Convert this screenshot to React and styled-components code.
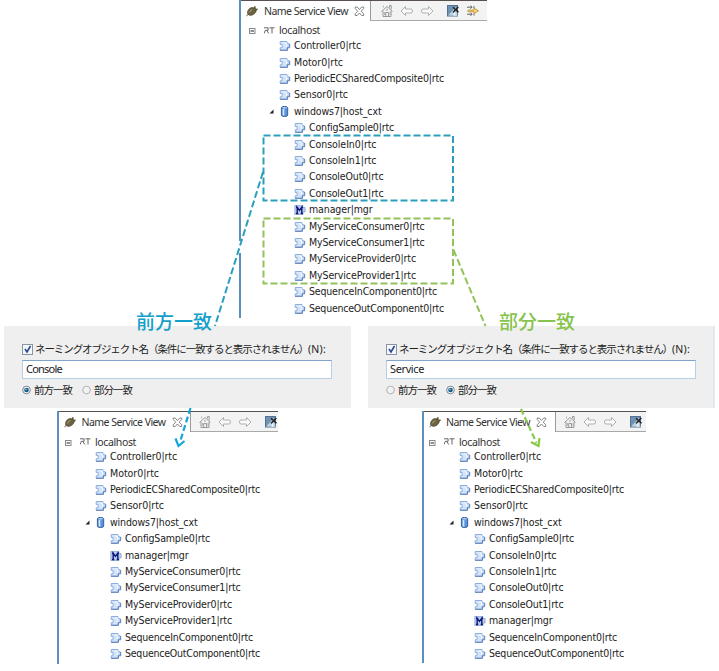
import React, { useLayoutEffect, useRef, useState } from "react";
import styled, { createGlobalStyle } from "styled-components";

const GlobalStyle = createGlobalStyle`
  body { margin: 0; background: #fff; }
  * { box-sizing: border-box; }
`;

const Page = styled.main`
  position: relative;
  width: 719px;
  height: 671px;
  overflow: hidden;
  background: #fff;
  color: #222;
  font: 10.5px/14px "Noto Sans", "Noto Sans CJK JP", sans-serif;
`;

const TopSection = styled.section`
  height: 326px;
  padding-left: 239px;
`;

const FilterSection = styled.section`
  display: flex;
  gap: 17px;
  height: 82px;
  padding-left: 4px;
`;

const ResultSection = styled.section`
  display: flex;
  gap: 144px;
  align-items: flex-start;
  padding: 3px 0 0 57px;
`;

const View = styled.div`
  display: flex;
  flex-direction: column;
  width: ${(p) => p.$width}px;
  height: ${(p) => p.$height}px;
  border-left: 2px solid #5b8fc0;
  overflow: hidden;
`;

const TabBar = styled.div`
  display: flex;
  flex: none;
  height: 21px;
  border-top: 1px solid #57504f;
`;

const Tab = styled.div`
  display: flex;
  align-items: center;
  flex: none;
  width: ${(p) => p.$width}px;
  padding-left: ${(p) => p.$inset}px;
  border-right: 1px solid #9a9a9a;
  color: #333;
`;

const TabTitle = styled.span`
  flex: none;
  width: 84px;
  margin: 0 6px 0 ${(p) => p.$gap}px;
`;

const Toolbar = styled.div`
  display: flex;
  align-items: center;
  flex: 1;
  gap: 6px;
  padding-left: ${(p) => p.$inset}px;
  overflow: hidden;
  background: #f3f3f3;
  border-bottom: 1px solid #a9a9a9;
  & > svg { flex: none; }
`;

const Tree = styled.ul`
  list-style: none;
  margin: 0;
  padding: ${(p) => p.$top}px 0 0 ${(p) => p.$inset}px;
`;

const RootRow = styled.li`
  display: flex;
  align-items: center;
  height: ${(p) => p.$height}px;
  color: #333;
`;

const Row = styled.li`
  display: flex;
  align-items: center;
  height: 16.42px;
  padding-left: ${(p) => (p.$level === 2 ? 45 : 20)}px;
  font-family: "DejaVu Sans Condensed", "DejaVu Sans", sans-serif;
  font-stretch: condensed;
  font-size: 10.5px;
`;

const Twist = styled.span`
  display: flex;
  align-items: center;
  width: 10px;
  height: 10px;
`;

const IconSlot = styled.span`
  display: flex;
  flex: none;
  width: 15px;
  padding-top: 2px;
`;

const FitBox = styled.span`
  display: inline-block;
  flex: none;
  white-space: nowrap;
`;

const FilterPanel = styled.div`
  width: 347px;
  height: 82px;
  padding: 17px 0 0 18px;
  background: #efefef;
  border-right: ${(p) => (p.$edge ? "2px solid #e1e9f1" : "0")};
`;

const CheckLine = styled.label`
  display: flex;
  align-items: center;
  height: 13px;
  color: #222;
  font-family: "Noto Sans CJK JP", sans-serif;
  font-size: 10.5px;
`;

const CheckText = styled.span`
  display: flex;
  margin: -2px 0 0 2px;
`;

const Shortcut = styled.span`
  font-family: "Noto Sans", sans-serif;
`;

const Field = styled.div`
  display: flex;
  align-items: center;
  width: 310px;
  height: 19px;
  margin-top: 4px;
  padding: 0 0 1px 3px;
  background: #fff;
  border: 1px solid #b5cfe7;
  border-top-color: #7fa5cd;
  font-size: 11px;
`;

const RadioLine = styled.div`
  display: flex;
  align-items: center;
  gap: 10px;
  height: 14px;
  margin-top: 3.5px;
  font-family: "Noto Sans CJK JP", sans-serif;
  font-size: 10.5px;
`;

const RadioOption = styled.label`
  display: flex;
  align-items: center;
  gap: 3px;
  width: 50px;
`;

const Overlay = styled.svg`
  position: absolute;
  inset: 0;
  pointer-events: none;
`;

const MatchLabel = styled.div`
  position: absolute;
  top: 310px;
  left: ${(p) => p.$left}px;
  color: ${(p) => p.$color};
  font: 500 19px/22px "Noto Sans CJK JP", sans-serif;
`;

/* Spreads the glyphs so that the text fills the given width. */
function Fit({ width, children }) {
  const ref = useRef(null);
  const [spacing, setSpacing] = useState(0);
  useLayoutEffect(() => {
    const node = ref.current;
    node.style.letterSpacing = "0px";
    const natural = node.getBoundingClientRect().width;
    const next = (width - natural) / children.length;
    node.style.letterSpacing = `${next}px`;
    setSpacing(next);
  }, [width, children]);
  return <FitBox ref={ref} style={{ letterSpacing: spacing }}>{children}</FitBox>;
}

const ComponentIcon = () => (
  <svg width="12" height="12" viewBox="0 0 12 12">
    <path d="M1.200 1.500h6.800v2.200h2.200v3.600H8v2.700H1.200V7.800h1.900V4.500H1.200z" fill="#d3e4fa" stroke="#8dafdd" strokeWidth="1" />
    <path d="M1 10.400h7.500V7.800h2.200V4" fill="none" stroke="#5a7cb6" strokeWidth=".9" />
    <path d="M4.500 3h3v4" fill="none" stroke="#f2f8ff" strokeWidth="1" />
  </svg>
);

const ManagerIcon = () => (
  <svg width="12" height="12" viewBox="0 0 12 12">
    <path d="M.8 1.500h8v2h2.300v4.500H9v2.500H.8z" fill="#b8cdf0" stroke="#8aa6d6" strokeWidth=".8" />
    <path d="M3.200 9.500V3.200l2.300 3.200 2.300-3.200v6.300M2 3.200h1.500M7.500 3.200H9M2 9.500h2.300M6.700 9.500H9" fill="none" stroke="#10187c" strokeWidth="1.400" />
  </svg>
);

const ContextIcon = () => (
  <svg width="12" height="12" viewBox="0 0 12 12">
    <path d="M2.400 1.700Q2.400.4 5.500.4t3.200 1.300v7.300q0 1.500-3.200 1.500t-3.100-1.500z" fill="#5b93d8" stroke="#2e5596" strokeWidth=".9" />
    <path d="M4.500 3v6.500" stroke="#cfe6ff" strokeWidth="1.700" />
    <ellipse cx="5.500" cy="1.700" rx="2.500" ry=".8" fill="#b7d2f2" />
  </svg>
);

const Expander = () => (
  <svg width="8" height="8" viewBox="0 0 8 8">
    <rect x=".5" y="1.500" width="5.500" height="5" fill="#fff" stroke="#888" />
    <path d="M1.500 4h3.500" stroke="#222" />
  </svg>
);

const RtIcon = () => (
  <svg width="12" height="9" viewBox="0 0 12 9" fill="none" stroke="#666">
    <path d="M-.2.800h4.300v2.500H1.500M1.500 3L0 6.500M2.800 3.500l2 3M5.500.800h5M8 .800V6.500" />
  </svg>
);

const PlugIcon = () => (
  <svg width="12" height="12" viewBox="0 0 12 12">
    <path d="M.5 11L3 8.800" stroke="#999" strokeWidth="1.300" />
    <path d="M1.500 8.500C1.200 5.500 3 3.200 5.800 2.500L9.500 3.300 10 6.500C8.800 9.400 5.500 11 3 10z" fill="#6b6342" stroke="#4a442c" strokeWidth=".7" />
    <path d="M3.200 7.500L6 4.300" stroke="#b3ab7d" />
    <path d="M8 3.500L9.300 1.300M9.500 5.500L11.500 3.700" stroke="#59502d" strokeWidth="1.500" />
  </svg>
);

const CloseIcon = () => (
  <svg width="11" height="11" viewBox="0 0 11 11">
    <path d="M1.200 1h2l2.200 2.500L7.700 1h2v1.500L7.200 5.200l2.500 2.600v1.700h-2L5.400 7 3.200 9.500h-2V7.800l2.500-2.600-2.500-2.700z" fill="#fff" stroke="#777" strokeWidth=".9" />
  </svg>
);

const HomeIcon = () => (
  <svg width="14" height="14" viewBox="0 0 14 14" fill="none" stroke="#999">
    <path d="M1.500 7.500L7 2.500l5.500 5M3 7v5.500h8V7M5.700 12.500v-4h2.800v4M7 4.800v2M9.500 3.500v-2h1.700v4" />
    <path d="M4.500 8v3M10 8v3M3.500 1.500v2" strokeWidth=".7" />
  </svg>
);

const ArrowIcon = ({ forward }) => (
  <svg width="14" height="12" viewBox="0 0 14 12">
    <path
      d="M1 6l4.500-4.500V4h5.500q1.500 0 1.500 2T11 8H5.500v2.500z"
      transform={forward ? "translate(14 0) scale(-1 1)" : undefined}
      fill="#fafafa" stroke="#b0b0b0"
    />
  </svg>
);

const FilterIcon = () => (
  <svg width="14" height="14" viewBox="0 0 14 14">
    <rect x="1.500" y="1.500" width="10" height="10.500" fill="#6e91b4" stroke="#53728f" />
    <path d="M2 11.500L10 3l1.500 9z" fill="#bcd2e0" />
    <path d="M7 3.300l5.500 5M12.300 3L7 8.500" stroke="#222" strokeWidth="1.500" />
    <path d="M8.500 8.500v3.200" stroke="#f7f7f7" strokeWidth="1.500" />
  </svg>
);

const LinkIcon = () => (
  <svg width="14" height="14" viewBox="0 0 14 14" fill="none">
    <path d="M1 3.200h5M1 10.200h5M4.500 1.500l1.500 1.700-1.500 1.500M4.500 8.700L6 10.200l-1.500 1.700M8 2v2M8 9.500v2" stroke="#666" />
    <path d="M2 6h6V4.200l4.500 2.600L8 9.500V7.700H2z" fill="#f6d884" stroke="#c09435" strokeWidth=".9" />
  </svg>
);

const CheckIcon = () => (
  <svg width="11" height="11" viewBox="0 0 11 11">
    <rect x=".5" y=".5" width="10" height="10" fill="#f4f6f8" stroke="#8795a5" />
    <path d="M3 5l2 3 3.500-6" fill="none" stroke="#294791" strokeWidth="1.600" />
  </svg>
);

const RadioIcon = ({ on }) => (
  <svg width="10" height="10" viewBox="0 0 10 10">
    <circle cx="5" cy="5" r="4.300" fill="#f1f1f1" stroke={on ? "#6d8194" : "#aaa"} />
    {on && <circle cx="5" cy="5" r="2.600" fill="#165a83" />}
    {on && <circle cx="4.400" cy="4.300" r="1" fill="#83cbe8" />}
  </svg>
);

const icons = { rtc: ComponentIcon, mgr: ManagerIcon, ctx: ContextIcon };

const top = [
  ["Controller0|rtc", 67], ["Motor0|rtc", 49], ["PeriodicECSharedComposite0|rtc", 150],
  ["Sensor0|rtc", 54], ["windows7|host_cxt", 87.5, "ctx"],
].map(([name, width, kind = "rtc"]) => ({ name, width, kind, level: 1 }));

const child = (name, width, kind = "rtc") => ({ name, width, kind, level: 2 });
const config = child("ConfigSample0|rtc", 85);
const consoles = [
  child("ConsoleIn0|rtc", 67.5), child("ConsoleIn1|rtc", 67.5),
  child("ConsoleOut0|rtc", 74.5), child("ConsoleOut1|rtc", 74.5),
];
const manager = child("manager|mgr", 63.5, "mgr");
const services = [
  child("MyServiceConsumer0|rtc", 115.5), child("MyServiceConsumer1|rtc", 115.5),
  child("MyServiceProvider0|rtc", 107), child("MyServiceProvider1|rtc", 107),
];
const sequences = [child("SequenceInComponent0|rtc", 128), child("SequenceOutComponent0|rtc", 135)];

function NameServiceView({ width, height, rows, inset, treeTop, rootHeight = 14, tabWidth, toolInset = 9, tabInset = 5, titleGap }) {
  return (
    <View $width={width} $height={height}>
      <TabBar>
        <Tab $width={tabWidth} $inset={tabInset}>
          <PlugIcon />
          <TabTitle $gap={titleGap}><Fit width={84}>Name Service View</Fit></TabTitle>
          <CloseIcon />
        </Tab>
        <Toolbar $inset={toolInset}>
          <HomeIcon /><ArrowIcon /><ArrowIcon forward />
          <span />
          <FilterIcon /><LinkIcon />
        </Toolbar>
      </TabBar>
      <Tree $inset={inset} $top={treeTop}>
        <RootRow $height={rootHeight}>
          <IconSlot><Expander /></IconSlot>
          <IconSlot><RtIcon /></IconSlot>
          <Fit width={41}>localhost</Fit>
        </RootRow>
        {rows.map((row) => {
          const Icon = icons[row.kind];
          return (
            <Row key={row.name} $level={row.level}>
              {row.level === 1 && (
                <Twist>
                  {row.kind === "ctx" && (
                    <svg width="6" height="6" viewBox="0 0 6 6"><path d="M4.500 1.500V5.500H.5z" fill="#222" /></svg>
                  )}
                </Twist>
              )}
              <IconSlot><Icon /></IconSlot>
              <Fit width={row.width}>{row.name}</Fit>
            </Row>
          );
        })}
      </Tree>
    </View>
  );
}

function NameFilter({ value, width, partial, edge }) {
  return (
    <FilterPanel $edge={edge}>
      <CheckLine>
        <CheckIcon />
        <CheckText>
          <Fit width={113}>ネーミングオブジェクト名</Fit>
          <Fit width={160}>（条件に一致すると表示されません）</Fit>
          <Shortcut><Fit width={18}>(N):</Fit></Shortcut>
        </CheckText>
      </CheckLine>
      <Field><Fit width={width}>{value}</Fit></Field>
      <RadioLine>
        <RadioOption><RadioIcon on={!partial} /><Fit width={38}>前方一致</Fit></RadioOption>
        <RadioOption><RadioIcon on={partial} /><Fit width={38}>部分一致</Fit></RadioOption>
      </RadioLine>
    </FilterPanel>
  );
}

export default function App() {
  return (
    <Page>
      <GlobalStyle />
      <TopSection>
        <NameServiceView width={248} height={318} inset={8} tabWidth={130} titleGap={6} treeTop={2}
          rows={[...top, config, ...consoles, manager, ...services, ...sequences]} />
      </TopSection>
      <FilterSection>
        <NameFilter value="Console" width={36} />
        <NameFilter value="Service" width={34} partial edge />
      </FilterSection>
      <ResultSection>
        <NameServiceView width={221} height={253} inset={6} tabWidth={132} titleGap={5.5} toolInset={7} treeTop={3} rootHeight={13}
          rows={[...top, config, manager, ...services, ...sequences]} />
        <NameServiceView width={224} height={252} inset={5} tabWidth={132} tabInset={4.5} titleGap={5.5} toolInset={7} treeTop={3} rootHeight={13}
          rows={[...top, config, ...consoles, manager, ...sequences]} />
      </ResultSection>
      <Overlay width="719" height="671" viewBox="0 0 719 671" fill="none">
        <path d="M239 241h3v12h-3z" fill="#fff" />
        <g stroke="#2a9fbd" strokeWidth="2">
          <rect x="263.500" y="135.500" width="189.500" height="65" strokeDasharray="7 3" />
          <path d="M263 172L215 326" strokeDasharray="7 3" />
        </g>
        <g stroke="#12a5d8" strokeWidth="2.200">
          <path d="M190.500 408L180 442" strokeDasharray="6 3" />
          <path d="M175.500 438.500L178.500 446L184.500 441" />
        </g>
        <g stroke="#93c15a" strokeWidth="2">
          <rect x="263.500" y="218.500" width="189.500" height="65" strokeDasharray="7 3" />
          <path d="M453.500 250L485.500 326" strokeDasharray="7 3" />
        </g>
        <g stroke="#8bc84c" strokeWidth="2.200">
          <path d="M521 409L536.500 443" strokeDasharray="6 3" />
          <path d="M531 442L538.500 446L539.500 438" />
        </g>
      </Overlay>
      <MatchLabel $left={136} $color="#159fcb">前方一致</MatchLabel>
      <MatchLabel $left={499} $color="#87c34d">部分一致</MatchLabel>
    </Page>
  );
}
